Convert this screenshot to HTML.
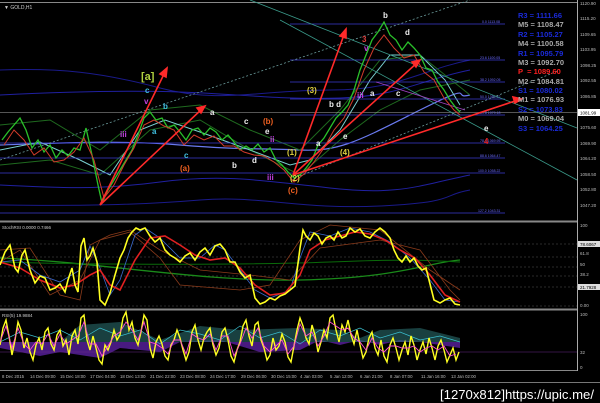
<!DOCTYPE html>
<html><head><meta charset="utf-8"><style>
html,body{margin:0;padding:0;background:#000;width:600px;height:403px;overflow:hidden}
svg{display:block}
text{font-family:"Liberation Sans",sans-serif}
</style></head><body>
<svg width="600" height="403" viewBox="0 0 600 403" xmlns="http://www.w3.org/2000/svg">
<rect width="600" height="403" fill="#000"/>
<line x1="0" y1="2.5" x2="577" y2="2.5" stroke="#888" stroke-width="1"/>
<line x1="577.5" y1="0" x2="577.5" y2="371" stroke="#aaa"/>
<line x1="0" y1="221.5" x2="577" y2="221.5" stroke="#888" stroke-width="2"/>
<line x1="0" y1="309.5" x2="577" y2="309.5" stroke="#888" stroke-width="2"/>
<line x1="0" y1="370.5" x2="577" y2="370.5" stroke="#888"/>
<line x1="0" y1="382.5" x2="600" y2="382.5" stroke="#777"/>
<text x="4" y="9" fill="#ccc" font-size="5">▼ GOLD,H1</text>

<g fill="none" stroke-width="1">
<path d="M0 70 C60 68,100 72,160 88 S260 90,330 90 S420 70,470 60" stroke="#1a1a8a"/>
<path d="M0 95 C60 92,120 90,180 92 S280 100,340 98 S420 80,470 70" stroke="#2020a0"/>
<path d="M0 185 C60 188,100 190,160 182 S260 180,330 188 S420 185,470 175" stroke="#2020a0"/>
<path d="M0 205 C80 206,140 205,200 200 S300 210,380 206 S440 195,470 190" stroke="#1a1a8a"/>
<path d="M0 145 C60 143,120 140,180 145 S260 148,300 150 S360 140,420 110 S450 100,470 95" stroke="#6a7af0" stroke-width="1.2"/>
<path d="M0 165 L50 160 L100 175 L150 130 L200 120 L250 150 L300 175 L340 140 L380 110 L420 90 L470 80" stroke="#1f6a1f"/>
<path d="M0 125 L50 120 L100 150 L150 110 L200 105 L250 130 L300 150 L340 110 L380 60 L420 55 L470 95" stroke="#1f6a1f"/>
<path d="M0 150 L40 142 L80 160 L110 175 L140 130 L165 120 L200 132 L250 150 L290 165 L310 160 L340 130 L370 80 L390 55 L420 55 L445 80 L460 105" stroke="#7ad0d0"/>
</g>
<g stroke="#3a3ad0" stroke-width="0.8">
<line x1="290" y1="24" x2="505" y2="24"/>
<line x1="290" y1="60" x2="505" y2="60"/>
<line x1="290" y1="82" x2="505" y2="82"/>
<line x1="290" y1="99" x2="505" y2="99"/>
<line x1="290" y1="115" x2="505" y2="115"/>
<line x1="0" y1="143" x2="505" y2="143"/>
<line x1="0" y1="158" x2="505" y2="158"/>
<line x1="0" y1="173" x2="505" y2="173"/>
<line x1="0" y1="213" x2="505" y2="213"/>
</g>
<line x1="0" y1="112.5" x2="577" y2="112.5" stroke="#aaa" stroke-width="0.6"/>
<g fill="#6a6aff" font-size="3.5">
<text x="482" y="23">0.0 1113.08</text><text x="480" y="59">23.6 1100.05</text><text x="480" y="81">38.2 1092.05</text><text x="480" y="98">50.0 1085.62</text><text x="480" y="114">61.8 1079.18</text><text x="480" y="142">78.6 1069.95</text><text x="480" y="157">88.6 1064.47</text><text x="478" y="172">100.0 1058.22</text><text x="478" y="212">127.2 1043.31</text>
</g>
<g fill="none">
<line x1="250" y1="0" x2="577" y2="128" stroke="#3a9a8a" stroke-width="0.8"/>
<line x1="280" y1="20" x2="577" y2="180" stroke="#3a9a8a" stroke-width="0.8"/>
<line x1="0" y1="160" x2="470" y2="0" stroke="#6a9a9a" stroke-width="0.8" stroke-dasharray="2,2"/>
<line x1="300" y1="176" x2="560" y2="70" stroke="#6a9a9a" stroke-width="0.8" stroke-dasharray="2,2"/>
<line x1="376" y1="82" x2="465" y2="110" stroke="#a040c0" stroke-width="0.8"/>
</g>
<polyline fill="none" stroke="#2ac02a" stroke-width="1.3" points="2,140 8,132 14,125 20,118 26,130 32,148 38,140 44,152 50,145 56,158 62,150 68,156 74,148 80,150 86,128 92,155 98,185 102,203 108,190 114,180 120,170 126,160 132,150 138,135 144,118 150,112 156,120 162,118 168,128 174,125 180,132 186,140 192,130 198,128 204,135 210,128 216,132 222,140 228,135 234,142 240,150 246,146 252,150 258,144 264,152 270,148 276,160 282,165 288,172 294,178 300,175 306,168 312,160 318,145 324,138 330,128 336,118 342,112 348,105 354,90 360,70 366,55 372,40 378,32 384,22 390,35 396,40 402,50 408,42 414,48 420,55 426,68 432,70 438,82 444,90 450,100 456,108 460,112"/>
<polyline fill="none" stroke="#d03a2a" stroke-width="1" points="4,145 14,130 24,140 34,155 44,148 54,162 64,160 74,152 84,138 94,160 104,198 114,185 124,165 134,148 144,125 154,120 164,126 174,130 184,145 194,135 204,140 214,136 224,146 234,146 244,152 254,155 264,156 274,162 284,170 294,182 304,174 314,162 324,148 334,130 344,118 354,98 364,70 374,48 384,35 394,48 404,58 414,55 424,72 434,80 444,98 454,110 460,115"/>
<g stroke="#ff2a2a" stroke-width="1.6" fill="#ff2a2a">
<line x1="100" y1="205" x2="165" y2="72"/><polygon points="167,68 160,74 166,77"/>
<line x1="100" y1="205" x2="203" y2="108"/><polygon points="205,106 197,108 201,113"/>
<line x1="293" y1="175" x2="345" y2="32"/><polygon points="346,29 340,36 346,38"/>
<line x1="293" y1="175" x2="418" y2="62"/><polygon points="420,60 412,62 416,67"/>
<line x1="293" y1="175" x2="518" y2="100"/><polygon points="522,99 513,97 515,103"/>
</g>
<g font-size="8" font-family="Liberation Serif,serif" font-weight="bold">
<text x="141" y="80" fill="#b0d040" font-size="11">[a]</text>
<text x="145" y="93" fill="#40c0e0">c</text>
<text x="144" y="104" fill="#c040e0">v</text>
<text x="163" y="109" fill="#40c0e0">b</text>
<text x="210" y="115" fill="#eee">a</text>
<text x="120" y="137" fill="#c040e0">iii</text>
<text x="152" y="134" fill="#40c0e0">a</text>
<text x="184" y="158" fill="#40c0e0">c</text>
<text x="180" y="171" fill="#f06020">(a)</text>
<text x="232" y="168" fill="#eee">b</text>
<text x="244" y="124" fill="#eee">c</text>
<text x="263" y="124" fill="#f06020">(b)</text>
<text x="265" y="134" fill="#eee">e</text>
<text x="252" y="163" fill="#eee">d</text>
<text x="270" y="142" fill="#c040e0">ii</text>
<text x="267" y="180" fill="#c040e0">iii</text>
<text x="288" y="193" fill="#f06020">(c)</text>
<text x="287" y="155" fill="#e0d040">(1)</text>
<text x="290" y="181" fill="#e0d040">(2)</text>
<text x="307" y="93" fill="#e0d040">(3)</text>
<text x="329" y="107" fill="#eee">b d</text>
<text x="343" y="139" fill="#eee">e</text>
<text x="340" y="155" fill="#e0d040">(4)</text>
<text x="316" y="146" fill="#eee">a</text>
<text x="362" y="42" fill="#e04040">3</text>
<text x="364" y="51" fill="#c040e0">v</text>
<text x="370" y="96" fill="#eee">a</text>
<text x="396" y="96" fill="#eee">c</text>
<text x="383" y="18" fill="#eee">b</text>
<text x="405" y="35" fill="#eee">d</text>
<text x="357" y="98" fill="#c040e0">iii</text>
<text x="484" y="131" fill="#eee">e</text>
<text x="484" y="144" fill="#e02020">4</text>
</g>
<g font-size="7.5" font-weight="bold" font-family="Liberation Sans,sans-serif">
<text x="518" y="18" fill="#1a2ad8">R3 = 1111.66</text>
<text x="518" y="27" fill="#aaa">M5 = 1108.47</text>
<text x="518" y="37" fill="#1a2ad8">R2 = 1105.27</text>
<text x="518" y="46" fill="#aaa">M4 = 1100.58</text>
<text x="518" y="56" fill="#1a2ad8">R1 = 1095.79</text>
<text x="518" y="65" fill="#aaa">M3 = 1092.70</text>
<text x="518" y="74" fill="#ff2020">P&#160;&#160;= 1089.60</text>
<text x="518" y="84" fill="#aaa">M2 = 1084.81</text>
<text x="518" y="93" fill="#1a2ad8">S1 = 1080.02</text>
<text x="518" y="102" fill="#aaa">M1 = 1076.93</text>
<text x="518" y="112" fill="#1a2ad8">S2 = 1073.83</text>
<text x="518" y="121" fill="#aaa">M0 = 1069.04</text>
<text x="518" y="131" fill="#1a2ad8">S3 = 1064.25</text>
</g>
<g fill="#bbb" font-size="4.5">
<text x="580" y="5">1120.90</text><text x="580" y="20">1115.20</text><text x="580" y="36">1109.65</text><text x="580" y="51">1103.95</text><text x="580" y="67">1098.25</text><text x="580" y="82">1092.55</text><text x="580" y="98">1086.85</text><text x="580" y="129">1075.60</text><text x="580" y="145">1069.90</text><text x="580" y="160">1064.20</text><text x="580" y="176">1058.50</text><text x="580" y="191">1052.80</text><text x="580" y="207">1047.20</text>
</g>
<rect x="578" y="109" width="22" height="7" fill="#fff"/><text x="580" y="114.5" fill="#000" font-size="4.5">1081.99</text>

<text x="2" y="229" fill="#ccc" font-size="4.5">StochRSI 0.0000 0.7466</text>
<g stroke="#555" stroke-width="0.5" stroke-dasharray="2,2">
<line x1="0" y1="244" x2="577" y2="244"/><line x1="0" y1="257" x2="577" y2="257"/><line x1="0" y1="267" x2="577" y2="267"/><line x1="0" y1="276" x2="577" y2="276"/><line x1="0" y1="287" x2="577" y2="287"/><line x1="0" y1="306" x2="577" y2="306"/>
</g>
<path d="M0 258 C100 262,200 282,300 280 S430 262,460 260" stroke="#1a8a1a" fill="none" stroke-width="1.3"/>
<path d="M0 262 C100 265,250 265,330 262 S420 260,460 262" stroke="#0a6a0a" fill="none" stroke-width="1"/>
<path d="M0 250 L30 248 L60 295 L80 300 L90 245 L110 235 L130 230 L160 250 L200 270 L250 275 L290 280 L320 248 L380 240 L420 250 L450 290 L460 300" stroke="#8a3a1a" fill="none" stroke-width="0.8"/>
<path d="M0 262 L20 250 L50 295 L80 280 L100 240 L130 232 L160 258 L180 285 L240 290 L270 285 L300 240 L330 225 L380 230 L430 270 L460 290" stroke="#8a3a1a" fill="none" stroke-width="0.8"/>
<polyline fill="none" stroke="#3a6ad0" stroke-width="0.8" points="0,262 20,260 40,275 60,282 80,270 90,246 100,268 110,295 120,280 135,235 145,228 160,238 180,258 200,258 215,245 225,250 240,270 255,290 270,298 290,290 300,258 310,232 330,236 350,228 370,232 390,242 410,258 430,280 445,300 460,302"/>
<polyline fill="none" stroke="#e02020" stroke-width="1.6" points="0,262 20,268 40,280 60,288 75,285 90,275 100,270 110,285 120,290 135,260 150,238 165,236 180,245 195,255 210,260 225,258 240,268 255,285 270,295 285,293 300,275 310,250 325,240 340,236 355,232 370,234 385,240 400,250 415,258 430,275 445,295 460,302"/>
<polyline fill="none" stroke="#ffff20" stroke-width="1.6" points="0,265 5,252 10,245 15,268 18,272 22,255 25,250 30,270 35,283 40,276 45,278 50,290 55,288 60,284 65,292 68,280 72,268 75,285 78,292 81,246 84,238 87,260 90,256 93,248 97,262 100,300 105,305 110,293 115,275 120,258 124,250 128,238 132,232 136,228 140,230 145,228 150,236 155,242 160,238 165,250 170,255 175,258 180,262 185,256 190,253 195,260 200,252 205,248 210,255 215,246 220,244 225,250 230,262 235,262 240,272 245,278 250,275 255,298 260,304 265,302 270,298 275,300 280,296 285,294 290,290 295,286 300,248 303,230 306,236 310,240 314,233 318,236 322,244 326,238 330,236 334,240 338,232 342,238 346,236 350,228 355,232 360,229 365,236 370,238 375,232 380,228 385,232 390,238 394,250 398,258 402,262 406,256 410,262 414,258 418,266 422,270 426,268 430,284 434,300 440,303 445,300 450,298 455,304 460,305"/>
<g fill="#bbb" font-size="4.5"><text x="580" y="227">100</text><text x="580" y="255">61.8</text><text x="580" y="266">50</text><text x="580" y="276">38.2</text><text x="580" y="307">0.00</text></g>
<rect x="578" y="241" width="22" height="6" fill="#ddd"/><text x="580" y="246" fill="#000" font-size="4.5">78.6067</text>
<rect x="578" y="284" width="22" height="6" fill="#ddd"/><text x="580" y="289" fill="#000" font-size="4.5">21.7928</text>

<text x="2" y="317" fill="#ccc" font-size="4.5">RSI(5) 19.9884</text>
<path d="M0 342 L0 348 L20 352 L40 356 L60 352 L80 355 L100 358 L120 348 L140 350 L160 352 L180 342 L220 340 L260 352 L300 350 L320 340 L340 345 L360 340 L380 345 L400 340 L420 342 L460 348 L460 342 Z" fill="#5a20a0" opacity="0.8"/>
<path d="M60 342 L80 325 L120 322 L160 340 L200 326 L240 330 L300 328 L340 330 L360 338 L380 330 L420 328 L460 338 L460 342 L60 342 Z" fill="#2a6a6a" opacity="0.6"/>
<line x1="0" y1="352" x2="577" y2="352" stroke="#6a2a8a" stroke-width="0.6"/>
<polyline fill="none" stroke="#3ac0d0" stroke-width="0.7" points="0,342 20,332 40,338 60,330 80,340 100,328 120,336 140,330 160,344 180,330 200,334 220,340 240,326 260,338 280,332 300,344 320,330 340,336 360,328 380,338 400,332 420,340 440,336 460,342"/>
<polyline fill="none" stroke="#ffff20" stroke-width="1.4" points="0,345 3,328 6,320 9,336 12,355 15,340 18,322 21,330 24,348 27,338 30,352 33,360 36,345 39,338 42,350 45,332 48,328 51,344 54,350 57,335 60,330 63,346 66,340 69,355 72,336 75,330 78,344 81,318 84,315 87,340 90,350 93,336 96,348 99,360 102,364 105,345 108,350 111,342 114,330 117,340 120,335 123,318 126,312 129,330 132,322 135,338 138,345 141,332 144,315 147,320 150,348 153,358 156,342 159,336 162,344 165,356 168,360 171,345 174,340 177,330 180,338 183,350 186,360 189,352 192,332 195,325 198,340 201,350 204,338 207,332 210,328 213,345 216,355 219,348 222,332 225,328 228,340 231,356 234,362 237,350 240,342 243,326 246,320 249,336 252,346 255,325 258,322 261,340 264,348 267,360 270,355 273,338 276,350 279,346 282,334 285,342 288,357 291,362 294,346 297,330 300,318 303,326 306,338 309,344 312,325 315,335 318,352 321,342 324,330 327,338 330,318 333,315 336,330 339,342 342,325 345,332 348,320 351,335 354,344 357,330 360,345 363,358 366,352 369,338 372,332 375,348 378,355 381,340 384,356 387,362 390,345 393,338 396,348 399,360 402,350 405,342 408,355 411,336 414,345 417,360 420,350 423,342 426,354 429,338 432,348 435,360 438,346 441,340 444,350 447,362 450,355 453,348 456,360 459,352"/>
<polyline fill="none" stroke="#ff50d0" stroke-width="0.9" points="0,342 6,326 12,348 18,328 24,344 30,350 36,342 42,344 48,334 54,346 60,334 66,344 72,340 78,336 84,322 90,344 96,344 102,356 108,346 114,336 120,332 126,322 132,330 138,340 144,322 150,342 156,344 162,348 168,354 174,340 180,340 186,354 192,334 198,338 204,340 210,334 216,350 222,336 228,336 234,356 240,344 246,328 252,338 258,328 264,346 270,352 276,346 282,340 288,354 294,346 300,324 306,336 312,332 318,346 324,336 330,322 336,326 342,330 348,328 354,338 360,342 366,350 372,338 378,348 384,352 390,346 396,346 402,348 408,348 414,346 420,352 426,348 432,346 438,350 444,346 450,356 456,354"/>
<g fill="#bbb" font-size="4.5"><text x="580" y="316">100</text><text x="580" y="354">32</text><text x="580" y="369">0</text></g>

<g fill="#bbb" font-size="4.3">
<text x="2" y="378">8 Dec 2015</text><text x="30" y="378">14 Dec 09:00</text><text x="60" y="378">15 Dec 18:00</text><text x="90" y="378">17 Dec 04:00</text><text x="120" y="378">18 Dec 13:00</text><text x="150" y="378">21 Dec 22:00</text><text x="180" y="378">23 Dec 08:00</text><text x="210" y="378">24 Dec 17:00</text><text x="241" y="378">29 Dec 06:00</text><text x="271" y="378">30 Dec 15:00</text><text x="300" y="378">4 Jan 03:00</text><text x="330" y="378">5 Jan 12:00</text><text x="360" y="378">6 Jan 21:00</text><text x="390" y="378">8 Jan 07:00</text><text x="421" y="378">11 Jan 16:00</text><text x="451" y="378">13 Jan 02:00</text>
</g>
<text x="440" y="399" fill="#fff" font-size="12.5" textLength="154" lengthAdjust="spacingAndGlyphs" font-family="Liberation Mono,monospace">[1270x812]https://upic.me/</text>
</svg>
</body></html>
